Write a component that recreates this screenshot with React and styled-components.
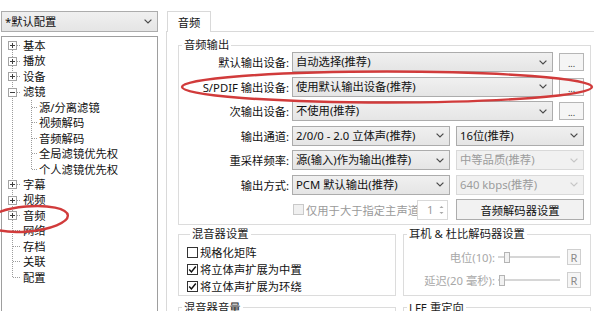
import React from 'react';
import styled, { createGlobalStyle } from 'styled-components';

const ROW_H = 15.45;
const LINE = '#9c9c9c';

const GlobalStyle = createGlobalStyle`
  html, body { margin: 0; padding: 0; background: #fff; }
  body {
    font-family: "Noto Sans", "Noto Sans CJK SC", sans-serif;
    font-size: 11.3px;
    color: #1b1b1b;
  }
  * { box-sizing: border-box; }
`;

const Window = styled.div`
  position: relative;
  display: flex;
  width: 594px;
  height: 311px;
  overflow: hidden;
  background: #fff;
`;

const Sidebar = styled.div`
  flex: 0 0 157px;
  margin-left: 1px;
  padding-top: 11px;
  display: flex;
  flex-direction: column;
  gap: 4px;
  height: 330px;
`;

const Combo = styled.div`
  display: flex;
  align-items: center;
  justify-content: space-between;
  height: ${p => p.$h || 20}px;
  padding: 0 5px 0 3px;
  border: 1px solid ${p => (p.$disabled ? '#d9d9d9' : '#acacac')};
  background: ${p => (p.$disabled ? '#f1f1f1' : 'linear-gradient(#f0f0f0, #e5e5e5)')};
  color: ${p => (p.$disabled ? '#9c9c9c' : '#111')};
  width: ${p => (p.$w ? `${p.$w}px` : 'auto')};
  flex: ${p => (p.$w ? 'none' : '1')};
  white-space: nowrap;
  overflow: hidden;
  line-height: 18px;
`;

const ProfileCombo = styled(Combo)`
  flex: none;
  width: 157px;
  height: 21px;
`;

const ChevronSvg = styled.svg`
  flex: none;
`;

const Chevron = ({ disabled }) => (
  <ChevronSvg width="8" height="5" viewBox="0 0 8 5">
    <path d="M0.6 0.6 L4 4 L7.4 0.6" fill="none" stroke={disabled ? '#c6c6c6' : '#4a4a4a'} strokeWidth="1.2" />
  </ChevronSvg>
);

const TreeBox = styled.div`
  flex: 1;
  border: 1px solid #9e9e9e;
  background: #fff;
  padding-top: 1px;
`;

const TreeList = styled.div`
  background-image: repeating-linear-gradient(to bottom, ${LINE} 0 1px, transparent 1px 2px);
  background-repeat: no-repeat;
  background-position: 10px ${ROW_H / 2}px;
  background-size: 1px calc(100% - ${ROW_H}px);
`;

const ChildList = styled.div`
  background-image: repeating-linear-gradient(to bottom, ${LINE} 0 1px, transparent 1px 2px);
  background-repeat: no-repeat;
  background-position: 29px 0;
  background-size: 1px calc(100% - ${ROW_H / 2}px);
`;

const TreeRow = styled.div`
  display: flex;
  align-items: center;
  height: ${ROW_H}px;
  line-height: ${ROW_H}px;
  padding-left: ${p => p.$indent}px;
  white-space: nowrap;
  color: #111;
`;

const HLine = styled.span`
  flex: none;
  width: ${p => p.$w}px;
  height: 1px;
  margin-right: 2px;
  background: repeating-linear-gradient(to right, ${LINE} 0 1px, transparent 1px 2px);
`;

const ExpSvg = styled.svg`
  flex: none;
  display: block;
`;

const Expander = ({ open }) => (
  <ExpSvg width="9" height="9" viewBox="0 0 9 9" shapeRendering="crispEdges">
    <rect x="0.5" y="0.5" width="8" height="8" fill="#fff" stroke="#a3a3a3" />
    <path d="M2 4.5 H7" stroke="#404040" />
    {!open && <path d="M4.5 2 V7" stroke="#404040" />}
  </ExpSvg>
);

const TabArea = styled.div`
  flex: 1;
  min-width: 0;
  margin-left: 8px;
  padding-top: 11px;
  display: flex;
  flex-direction: column;
`;

const TabStrip = styled.div`
  display: flex;
  height: 20px;
  padding-left: 1px;
`;

const Tab = styled.div`
  position: relative;
  z-index: 1;
  width: 44px;
  height: 21px;
  border: 1px solid #d9d9d9;
  border-bottom: none;
  background: #fff;
  display: flex;
  align-items: center;
  justify-content: center;
  padding-bottom: 1px;
  color: #111;
`;

const TabPanel = styled.div`
  flex: 1;
  border-top: 1px solid #d9d9d9;
  border-left: 1px solid #d9d9d9;
  padding: 6px 0 0 11px;
  display: flex;
  flex-direction: column;
  gap: 2px;
`;

const Group = styled.fieldset`
  margin: 0;
  min-width: 0;
  width: ${p => p.$w}px;
  padding: ${p => p.$pad || '0'};
  border: 1px solid #dcdcdc;
  display: flex;
  flex-direction: column;
  gap: ${p => p.$gap || 0}px;
  flex: none;
  min-height: ${p => p.$minH || 0}px;
`;

const Legend = styled.legend`
  margin-left: 3px;
  padding: 0 2px;
  line-height: 14px;
  color: #1b1b1b;
`;

const FormRow = styled.div`
  display: grid;
  grid-template-columns: 110px 1fr;
  column-gap: 3px;
  align-items: center;
  height: 20px;
`;

const FieldLabel = styled.div`
  text-align: right;
  white-space: nowrap;
  color: #111;
`;

const Controls = styled.div`
  display: flex;
  align-items: center;
  gap: 6px;
  height: 100%;
`;

const DotsButton = styled.div`
  flex: none;
  width: 25px;
  height: 18px;
  border: 1px solid #b6b6b6;
  background: #f5f5f5;
  display: flex;
  align-items: center;
  justify-content: center;
  font-size: 9px;
  line-height: 1;
  color: #333;
  padding-top: 3px;
`;

const PushButton = styled.div`
  flex: 1;
  height: 21px;
  border: 1px solid #adadad;
  background: #f2f2f2;
  display: flex;
  align-items: center;
  justify-content: center;
  color: #111;
`;

const CheckArea = styled.div`
  flex: none;
  width: 158px;
  height: 100%;
  display: flex;
  align-items: center;
  padding: 0 2px 0 1px;
`;

const CheckText = styled.span`
  flex: 1;
  min-width: 0;
  overflow: hidden;
  white-space: nowrap;
  color: ${p => (p.$disabled ? '#9a9a9a' : '#111')};
  margin-left: 2px;
`;

const Box = styled.span`
  flex: none;
  width: 11px;
  height: 11px;
  border: 1px solid ${p => (p.$disabled ? '#c9c9c9' : '#333')};
  background: ${p => (p.$disabled ? '#f0f0f0' : '#fff')};
  display: flex;
  align-items: center;
  justify-content: center;
`;

const CheckBox = ({ checked, disabled }) => (
  <Box $disabled={disabled}>
    {checked && (
      <svg width="9" height="9" viewBox="0 0 9 9">
        <path d="M1.2 4.6 L3.4 6.9 L7.8 1.6" fill="none" stroke="#111" strokeWidth="1.5" />
      </svg>
    )}
  </Box>
);

const Spin = styled.div`
  flex: none;
  width: 31px;
  height: 20px;
  border: 1px solid #d9d9d9;
  background: #fff;
  display: flex;
  align-items: center;
  justify-content: space-between;
  padding: 0 1px 0 9px;
  color: #9a9a9a;
`;

const SpinArrows = () => (
  <svg width="9" height="14" viewBox="0 0 9 14">
    <path d="M2.5 5 L4.5 3 L6.5 5 Z" fill="#a8a8a8" />
    <path d="M2.5 9 L4.5 11 L6.5 9 Z" fill="#a8a8a8" />
  </svg>
);

const GroupRow = styled.div`
  display: flex;
  gap: 7px;
  margin-top: ${p => p.$mt || 0}px;
`;

const CheckRow = styled.div`
  display: flex;
  align-items: center;
  height: 17px;
  white-space: nowrap;
  color: #111;
`;

const SliderRow = styled.div`
  display: flex;
  align-items: center;
  height: 17px;
`;

const DimLabel = styled.div`
  flex: none;
  width: 91px;
  text-align: right;
  white-space: nowrap;
  color: #a8a8a8;
`;

const Track = styled.div`
  flex: none;
  width: 62px;
  height: 13px;
  margin-left: 3px;
  display: flex;
  align-items: center;
  background: linear-gradient(#d6d6d6, #d6d6d6) center / 100% 2px no-repeat;
`;

const Thumb = styled.div`
  flex: none;
  width: 6px;
  height: 11px;
  border: 1px solid #b4b4b4;
  background: #f2f2f2;
`;

const RButton = styled.div`
  flex: none;
  width: 14px;
  height: 16px;
  margin-left: 7px;
  border: 1px solid #cfcfcf;
  background: #f6f6f6;
  color: #8a8a8a;
  display: flex;
  align-items: center;
  justify-content: center;
  font-size: 11px;
`;

const Overlay = styled.svg`
  position: absolute;
  top: 0;
  left: 0;
  pointer-events: none;
`;

const treeItems = [
  { label: '基本', expander: 'plus' },
  { label: '播放', expander: 'plus' },
  { label: '设备', expander: 'plus' },
  { label: '滤镜', expander: 'minus', children: ['源/分离滤镜', '视频解码', '音频解码', '全局滤镜优先权', '个人滤镜优先权'] },
  { label: '字幕', expander: 'plus' },
  { label: '视频', expander: 'plus' },
  { label: '音频', expander: 'plus' },
  { label: '网络' },
  { label: '存档' },
  { label: '关联' },
  { label: '配置' },
];

const sliders = [
  { label: '电位(10):', value: 10, max: 100 },
  { label: '延迟(20 毫秒):', value: 20, max: 1000 },
];

const TRACK_RANGE = 62 - 6;

export default function App() {
  return (
    <>
      <GlobalStyle />
      <Window>
        <Sidebar>
          <ProfileCombo>
            <span>*默认配置</span>
            <Chevron />
          </ProfileCombo>
          <TreeBox>
            <TreeList>
              {treeItems.map(item => (
                <React.Fragment key={item.label}>
                  <TreeRow $indent={item.expander ? 6 : 11}>
                    {item.expander && <Expander open={item.expander === 'minus'} />}
                    <HLine $w={item.expander ? 4 : 8} />
                    {item.label}
                  </TreeRow>
                  {item.children && (
                    <ChildList>
                      {item.children.map(c => (
                        <TreeRow key={c} $indent={30}>
                          <HLine $w={5} />
                          {c}
                        </TreeRow>
                      ))}
                    </ChildList>
                  )}
                </React.Fragment>
              ))}
            </TreeList>
          </TreeBox>
        </Sidebar>

        <TabArea>
          <TabStrip>
            <Tab>音频</Tab>
          </TabStrip>
          <TabPanel>
            <Group $w={413} $pad="0 6px 5px 0" $gap={4.5}>
              <Legend>音频输出</Legend>
              <FormRow>
                <FieldLabel>默认输出设备:</FieldLabel>
                <Controls>
                  <Combo><span>自动选择(推荐)</span><Chevron /></Combo>
                  <DotsButton>...</DotsButton>
                </Controls>
              </FormRow>
              <FormRow>
                <FieldLabel>S/PDIF 输出设备:</FieldLabel>
                <Controls>
                  <Combo><span>使用默认输出设备(推荐)</span><Chevron /></Combo>
                  <DotsButton>...</DotsButton>
                </Controls>
              </FormRow>
              <FormRow>
                <FieldLabel>次输出设备:</FieldLabel>
                <Controls>
                  <Combo><span>不使用(推荐)</span><Chevron /></Combo>
                  <DotsButton>...</DotsButton>
                </Controls>
              </FormRow>
              <FormRow>
                <FieldLabel>输出通道:</FieldLabel>
                <Controls>
                  <Combo $w={158}><span>2/0/0 - 2.0 立体声(推荐)</span><Chevron /></Combo>
                  <Combo><span>16位(推荐)</span><Chevron /></Combo>
                </Controls>
              </FormRow>
              <FormRow>
                <FieldLabel>重采样频率:</FieldLabel>
                <Controls>
                  <Combo $w={158}><span>源(输入)作为输出(推荐)</span><Chevron /></Combo>
                  <Combo $disabled><span>中等品质(推荐)</span><Chevron disabled /></Combo>
                </Controls>
              </FormRow>
              <FormRow>
                <FieldLabel>输出方式:</FieldLabel>
                <Controls>
                  <Combo $w={158}><span>PCM 默认输出(推荐)</span><Chevron /></Combo>
                  <Combo $disabled><span>640 kbps(推荐)</span><Chevron disabled /></Combo>
                </Controls>
              </FormRow>
              <FormRow>
                <span />
                <Controls>
                  <CheckArea>
                    <CheckBox disabled />
                    <CheckText $disabled>仅用于大于指定主声道数</CheckText>
                    <Spin>1<SpinArrows /></Spin>
                  </CheckArea>
                  <PushButton>音频解码器设置</PushButton>
                </Controls>
              </FormRow>
            </Group>

            <GroupRow>
              <Group $w={218} $pad="2.5px 0 0 8px">
                <Legend>混音器设置</Legend>
                <CheckRow><CheckBox /><CheckText>规格化矩阵</CheckText></CheckRow>
                <CheckRow><CheckBox checked /><CheckText>将立体声扩展为中置</CheckText></CheckRow>
                <CheckRow><CheckBox checked /><CheckText>将立体声扩展为环绕</CheckText></CheckRow>
              </Group>
              <Group $w={188} $pad="7.5px 9px 6px 0" $gap={6}>
                <Legend>耳机 &amp; 杜比解码器设置</Legend>
                {sliders.map(s => (
                  <SliderRow key={s.label}>
                    <DimLabel>{s.label}</DimLabel>
                    <Track>
                      <Thumb style={{ marginLeft: Math.round((s.value / s.max) * TRACK_RANGE) }} />
                    </Track>
                    <RButton>R</RButton>
                  </SliderRow>
                ))}
              </Group>
            </GroupRow>

            <GroupRow $mt={3}>
              <Group $w={218} $minH={60}>
                <Legend>混音器音量</Legend>
              </Group>
              <Group $w={188} $minH={60}>
                <Legend>LFE 重定向</Legend>
              </Group>
            </GroupRow>
          </TabPanel>
        </TabArea>

        <Overlay width="594" height="311" viewBox="0 0 594 311">
          <ellipse cx="387" cy="87" rx="205" ry="15.5" fill="none" stroke="#d13b3b" strokeWidth="2.4" />
          <ellipse cx="27" cy="219" rx="41" ry="12.5" transform="rotate(-5 27 219)" fill="none" stroke="#d13b3b" strokeWidth="2.4" />
        </Overlay>
      </Window>
    </>
  );
}
